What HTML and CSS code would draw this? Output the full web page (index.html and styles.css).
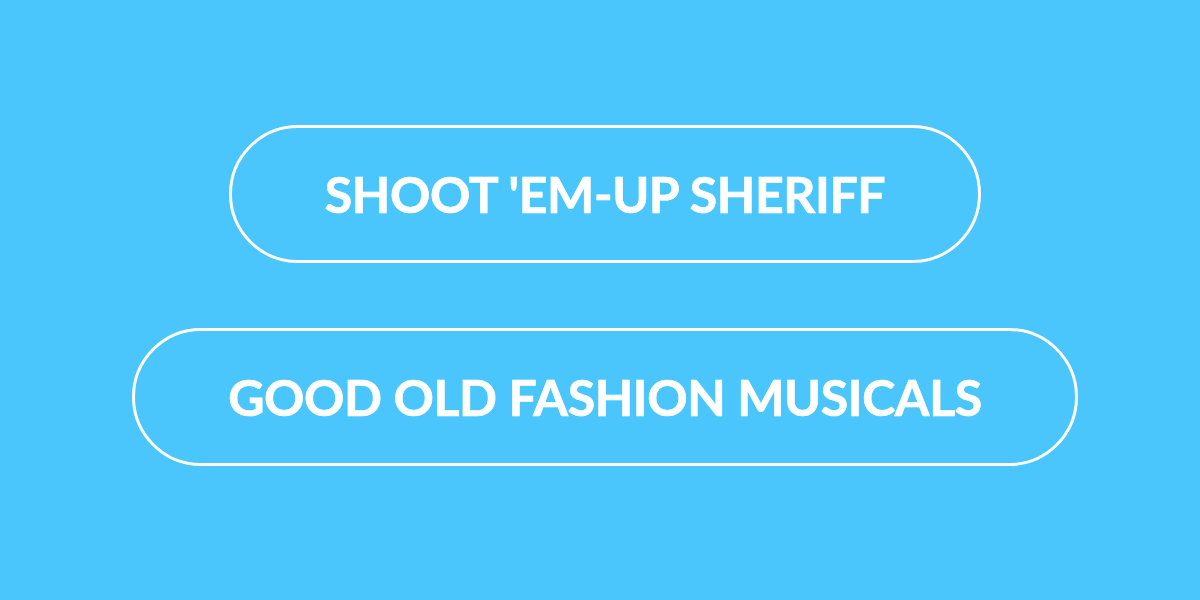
FILE: index.html
```html
<!DOCTYPE html>
<html lang="en">
<head>
    <meta charset="UTF-8">
    <meta name="viewport" content="width=device-width, initial-scale=1.0">
    <title>Movie Genres</title>
    <link rel="stylesheet" href="styles.css">
</head>
<body>
    <div class="genre-list">
        <a href="#" class="genre-btn">Shoot 'em-up sheriff</a>
        <a href="#" class="genre-btn">Good old fashion musicals</a>
    </div>
</body>
</html>
```

FILE: styles.css
```css
html, body {
    height: 100%;
}
body {
    margin: 0;
    background-color: #4bc6fc;
    font-family: Lato, "Open Sans", sans-serif;
}
.genre-list {
    height: 100%;
    display: flex;
    flex-direction: column;
    align-items: center;
    justify-content: center;
    gap: 65px;
    padding-left: 10px;
    padding-bottom: 10px;
    box-sizing: border-box;
}
.genre-btn {
    display: block;
    padding: 0 93px;
    height: 132px;
    line-height: 132px;
    border: 3px solid #fff;
    border-radius: 70px;
    color: #fff;
    text-decoration: none;
    text-transform: uppercase;
    font-weight: 700;
    font-size: 50px;
    letter-spacing: -0.4px;
    -webkit-text-stroke: 0.7px #fff;
    white-space: nowrap;
}
```
